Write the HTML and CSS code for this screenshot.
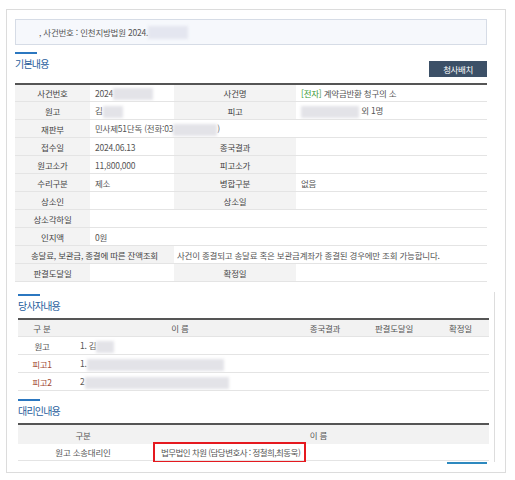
FILE: index.html
```html
<!DOCTYPE html>
<html lang="ko">
<head>
<meta charset="utf-8">
<title>사건일반내용</title>
<link rel="stylesheet" href="styles.css">
</head>
<body>
<div class="frame">
  <div class="case-bar">
    <span class="case-text">, 사건번호 : 인천지방법원 2024.</span><span class="redact r-case"></span>
  </div>

  <div class="sec-head">
    <h2 class="sec-title">기본내용</h2>
    <button class="btn-map" type="button">청사배치</button>
  </div>

  <table class="info">
    <colgroup><col class="ic1"><col class="ic2"><col class="ic3"><col class="ic4"></colgroup>
    <tr class="first">
      <th>사건번호</th><td>2024<span class="redact r-no"></span></td>
      <th>사건명</th><td><span class="green">[전자]</span> 계약금반환 청구의 소</td>
    </tr>
    <tr>
      <th>원고</th><td>김<span class="redact r-name"></span></td>
      <th>피고</th><td><span class="redact r-def"></span> 외 1명</td>
    </tr>
    <tr>
      <th>재판부</th><td colspan="3">민사제51단독 (전화:03<span class="redact r-tel"></span>)</td>
    </tr>
    <tr>
      <th>접수일</th><td>2024.06.13</td>
      <th>종국결과</th><td></td>
    </tr>
    <tr>
      <th>원고소가</th><td>11,800,000</td>
      <th>피고소가</th><td></td>
    </tr>
    <tr>
      <th>수리구분</th><td>제소</td>
      <th>병합구분</th><td>없음</td>
    </tr>
    <tr>
      <th>상소인</th><td></td>
      <th>상소일</th><td></td>
    </tr>
    <tr>
      <th>상소각하일</th><td colspan="3"></td>
    </tr>
    <tr>
      <th>인지액</th><td colspan="3">0원</td>
    </tr>
    <tr>
      <th colspan="2">송달료, 보관금, 종결에 따른 잔액조회</th>
      <td colspan="2" class="note">사건이 종결되고 송달료 혹은 보관금계좌가 종결된 경우에만 조회 가능합니다.</td>
    </tr>
    <tr>
      <th>판결도달일</th><td></td>
      <th>확정일</th><td></td>
    </tr>
  </table>

  <div class="scroll-area">
    <h2 class="sec-title">당사자내용</h2>
    <table class="party">
      <colgroup><col class="pc1"><col class="pc2"><col class="pc3"><col class="pc4"><col class="pc5"></colgroup>
      <tr class="head">
        <th>구 분</th><th>이 름</th><th>종국결과</th><th>판결도달일</th><th>확정일</th>
      </tr>
      <tr>
        <td class="kind">원고</td><td class="nm">1. 김<span class="redact r-p1"></span></td><td></td><td></td><td></td>
      </tr>
      <tr>
        <td class="kind def">피고1</td><td class="nm">1.<span class="redact r-p2"></span></td><td></td><td></td><td></td>
      </tr>
      <tr>
        <td class="kind def">피고2</td><td class="nm">2<span class="redact r-p3"></span></td><td></td><td></td><td></td>
      </tr>
    </table>

    <h2 class="sec-title sec-agent">대리인내용</h2>
    <table class="agent">
      <colgroup><col class="ac1"><col class="ac2"></colgroup>
      <tr class="head">
        <th>구분</th><th>이 름</th>
      </tr>
      <tr>
        <td class="kind">원고 소송대리인</td>
        <td class="nm"><span class="mark">법무법인 차원 (담당변호사 : 정철희,최동욱)</span></td>
      </tr>
    </table>
  </div>
  <div class="next-bar"></div>
</div>
</body>
</html>
```

FILE: styles.css
```css
* { box-sizing: border-box; }

html, body {
  margin: 0;
  padding: 0;
  background: #ffffff;
}

body {
  font-family: "Noto Sans CJK KR", "Noto Sans", sans-serif;
  font-size: 8.5px;
  letter-spacing: -0.22px;
  color: #555555;
}

.frame {
  width: 500px;
  height: 464px;
  margin: 9px 0 0 6px;
  padding: 9px 18px 0 8px;
  border: 1px solid #dcdcdc;
}

.case-bar {
  height: 26px;
  padding-left: 23px;
  border: 1px solid #d6dce6;
  background: #f6f8fc;
  display: flex;
  align-items: center;
  color: #555;
}

.redact {
  display: inline-block;
  height: 12px;
  vertical-align: middle;
  background: #e3e3e8;
  filter: blur(1.5px);
}

.case-bar .redact { background: #e4e6f0; height: 13px; }

.r-case { width: 40px; }
.r-no { width: 40px; }
.r-name { width: 20px; }
.r-def { width: 58px; }
.r-tel { width: 44px; }
.r-p1 { width: 18px; }
.r-p2 { width: 137px; }
.r-p3 { width: 144px; }

.sec-head {
  display: flex;
  justify-content: space-between;
  align-items: flex-start;
  margin-top: 7px;
}

.sec-title {
  margin: 0;
  font-size: 10px;
  font-weight: normal;
  letter-spacing: -0.8px;
  line-height: 16px;
  color: #1f5d9c;
}

.sec-title::before {
  content: "";
  display: block;
  width: 22px;
  height: 2px;
  margin-bottom: 2px;
  background: #2b77c0;
}

.btn-map {
  margin-top: 9px;
  width: 58px;
  height: 16px;
  padding: 0;
  border: 0;
  background: #3c5067;
  color: #ffffff;
  font-family: inherit;
  font-size: 8.5px;
  letter-spacing: -0.4px;
  line-height: 16px;
}

table {
  border-collapse: separate;
  border-spacing: 0;
  table-layout: fixed;
  border-top: 2px solid #555555;
}

th, td {
  padding: 0;
  height: 18px;
  line-height: 14px;
  border-bottom: 1px solid #e4e4e4;
  font-weight: normal;
  white-space: nowrap;
  overflow: hidden;
}

.info {
  width: 472px;
  margin-top: 6px;
}

.info .ic1 { width: 75px; }
.info .ic2 { width: 84px; }
.info .ic3 { width: 122px; }
.info .ic4 { width: 191px; }

.info th {
  background: #f3f3f3;
  color: #444444;
  text-align: center;
}

.info td {
  padding-left: 5px;
  text-align: left;
}

.info .first th, .info .first td { height: 17px; }

.info td.note { padding-left: 3px; }

.green { color: #3b9a35; }

.scroll-area {
  width: 480px;
  height: 170px;
  margin-top: 10px;
  margin-right: -8px;
  padding: 2px 0 0 3px;
  border-right: 1px solid #dddddd;
  overflow: hidden;
}

.party, .agent {
  width: 471px;
  margin-top: 4px;
}

.party .pc1 { width: 48px; }
.party .pc2 { width: 228px; }
.party .pc3 { width: 62px; }
.party .pc4 { width: 76px; }
.party .pc5 { width: 57px; }

.party .head th, .agent .head th {
  background: #f2f2f2;
  color: #555555;
  text-align: center;
}

.party .head th { height: 17px; }

.kind { text-align: center; color: #555555; }
.kind.def { color: #a24a35; }

.party td.nm { padding-left: 14px; }

.sec-agent { margin-top: 8px; }

.agent .ac1 { width: 130px; }
.agent .ac2 { width: 341px; }

.agent .head th {
  height: 19px;
  border-bottom: 0;
}

.agent td { height: 17px; overflow: visible; }
.agent td.nm { padding-left: 5px; }

.mark {
  display: inline-block;
  padding: 2px 4px 2px 6px;
  margin: -4px 0;
  border: 2px solid #e5191f;
  line-height: 13px;
  letter-spacing: -0.55px;
  color: #555555;
}

.next-bar {
  width: 40px;
  height: 2px;
  margin-left: auto;
  background: #2d89bf;
}
```
